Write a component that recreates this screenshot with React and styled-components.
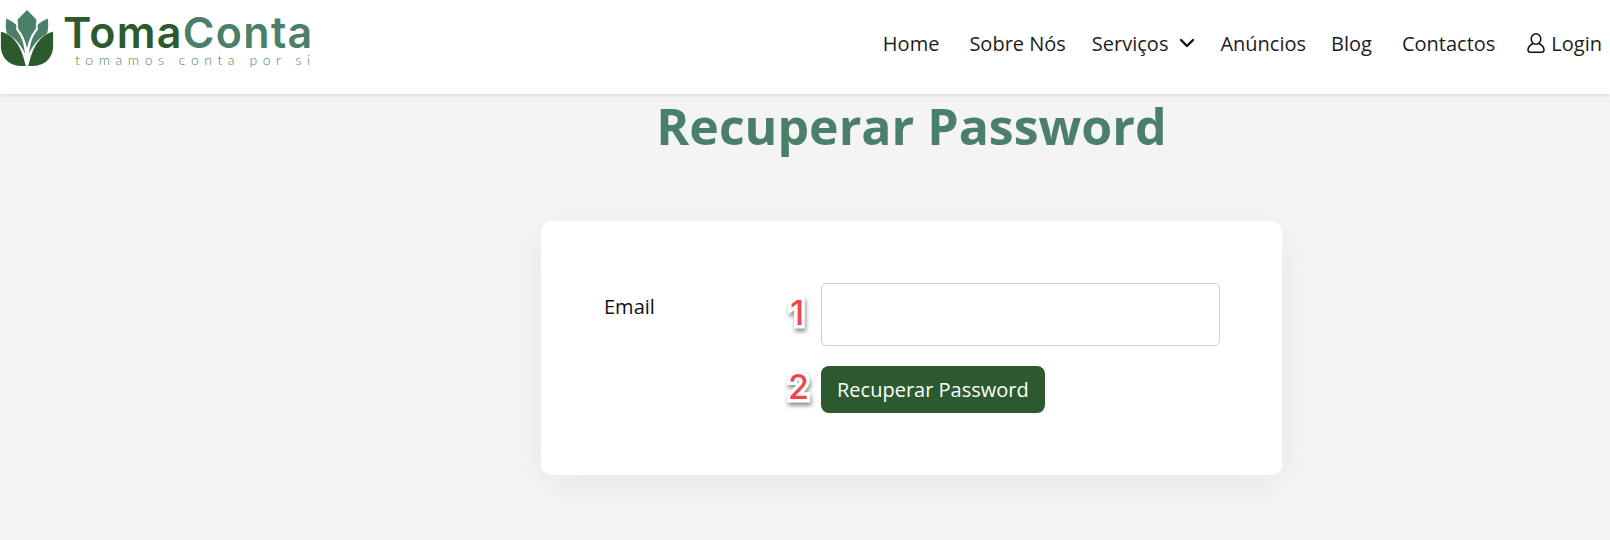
import styled, {createGlobalStyle} from 'styled-components';
import {ChevronDown} from 'lucide-react';

const GlobalStyle = createGlobalStyle`
  html, body {
    margin: 0;
    height: 540px;
    overflow: hidden;
    background: #f4f4f4;
    font-family: "Open Sans", "Noto Sans", sans-serif;
  }
`;

const Header = styled.header`
  height: 94px;
  box-sizing: border-box;
  background: #fff;
  box-shadow: 0 1px 4px rgba(0, 0, 0, 0.12);
  display: flex;
  justify-content: space-between;
  padding: 0 8px 0 0;
`;

const Brand = styled.a`
  display: flex;
  align-items: flex-start;
  padding-top: 10px;
  gap: 9px;
`;

const BrandText = styled.div`
  display: flex;
  flex-direction: column;
  width: 250px;
`;

const BrandName = styled.div`
  font-family: Inter, "Liberation Sans", sans-serif;
  font-size: 43px;
  line-height: 44px;
  font-weight: 600;
  letter-spacing: 1.3px;
  color: #2c5a2e;
  white-space: nowrap;

  span {
    color: #4a8069;
  }
`;

const BrandTagline = styled.div`
  font-family: Lato, sans-serif;
  font-size: 14px;
  font-weight: 300;
  line-height: 12px;
  letter-spacing: 5.55px;
  color: #4a8069;
  white-space: nowrap;
  padding-left: 12px;
`;

const Nav = styled.nav`
  display: flex;
  align-items: center;
  padding-bottom: 8px;
`;

const NavLink = styled.a`
  display: flex;
  align-items: center;
  gap: ${p => p.$iconGap || 0}px;
  margin-left: ${p => p.$offset}px;
  font-size: 20px;
  color: #1c1c1c;
  white-space: nowrap;
`;

const Main = styled.main`
  display: flex;
  flex-direction: column;
  align-items: center;
  padding-left: 213px;
`;

const Title = styled.h1`
  margin: 0;
  font-size: 50px;
  line-height: 64px;
  font-weight: 700;
  color: #4a8069;
`;

const Card = styled.section`
  position: relative;
  width: 741px;
  height: 254px;
  margin-top: 63px;
  box-sizing: border-box;
  padding: 62px 61px 0 63px;
  background: #fff;
  border-radius: 10px;
  box-shadow: 0 10px 40px rgba(0, 0, 0, 0.05);
  display: grid;
  grid-template-columns: 217px 399px;
  grid-template-rows: 63px 47px;
  row-gap: 20px;
`;

const Label = styled.label`
  font-size: 20px;
  line-height: 24px;
  padding-top: 12px;
  color: #111;
`;

const Field = styled.div`
  position: relative;
  grid-column: 2;
`;

const Input = styled.input`
  display: block;
  width: 100%;
  height: 63px;
  box-sizing: border-box;
  border: 1px solid #cfcfcf;
  border-radius: 5px;
  background: #fff;
`;

const Button = styled.button`
  display: block;
  height: 47px;
  padding: 0 16px;
  border: 0;
  border-radius: 8px;
  background: #2c5a2e;
  color: #fff;
  font-family: inherit;
  font-size: 20px;
`;

const Marker = styled.span`
  position: absolute;
  left: ${p => p.$left}px;
  top: ${p => p.$top}px;
  font-family: Inter, "Liberation Sans", sans-serif;
  font-size: 34px;
  line-height: 36px;
  font-weight: 500;
  color: #f5444a;
  -webkit-text-stroke: 7px #fff;
  paint-order: stroke fill;
  filter: drop-shadow(1px 3px 2px rgba(0, 0, 0, 0.45));
`;

function Logo() {
  return (
    <svg width="54" height="57" viewBox="0 15 160 170">
      <path d="M80 15 L108 43 L106 72 C95 85 85 105 80 130 C75 105 65 85 54 72 L52 43 Z" fill="#4a8069" />
      <path d="M18 40 C30 45 42 52 48 60 L48 75 C62 90 70 110 74 145 C60 115 40 95 20 85 C16 70 16 55 18 40 Z" fill="#4a8069" />
      <path d="M142 40 C130 45 118 52 112 60 L112 75 C98 90 90 110 86 145 C100 115 120 95 140 85 C144 70 144 55 142 40 Z" fill="#4a8069" />
      <path d="M2 80 C35 88 62 115 76 182 C35 185 2 165 2 120 Z" fill="#2c5a2e" />
      <path d="M158 80 C125 88 98 115 84 182 C125 185 158 165 158 120 Z" fill="#2c5a2e" />
    </svg>
  );
}

function UserIcon() {
  return (
    <svg width="18" height="20" viewBox="0 0 18 20" fill="none" stroke="#111" strokeWidth="1.5">
      <ellipse cx="9" cy="6" rx="4.8" ry="5.2" />
      <path d="M6 10.5 C3 12 1 14.5 1 17 C1 18.6 2 19.2 3.5 19.2 H14.5 C16 19.2 17 18.6 17 17 C17 14.5 15 12 12 10.5" />
    </svg>
  );
}

export default function App() {
  return (
    <>
      <GlobalStyle />
      <Header>
        <Brand>
          <Logo />
          <BrandText>
            <BrandName>Toma<span>Conta</span></BrandName>
            <BrandTagline>tomamos conta por si</BrandTagline>
          </BrandText>
        </Brand>
        <Nav>
          <NavLink $offset={0}>Home</NavLink>
          <NavLink $offset={30}>Sobre Nós</NavLink>
          <NavLink $offset={26} $iconGap={7}>Serviços <ChevronDown size={24} strokeWidth={2.4} color="#111" /></NavLink>
          <NavLink $offset={21}>Anúncios</NavLink>
          <NavLink $offset={25}>Blog</NavLink>
          <NavLink $offset={30}>Contactos</NavLink>
          <NavLink $offset={32} $iconGap={6}><UserIcon />Login</NavLink>
        </Nav>
      </Header>
      <Main>
        <Title>Recuperar Password</Title>
        <Card>
          <Label htmlFor="email">Email</Label>
          <Field>
            <Marker $left={-31} $top={12}>1</Marker>
            <Input id="email" type="email" />
          </Field>
          <Field>
            <Marker $left={-33} $top={3}>2</Marker>
            <Button type="button">Recuperar Password</Button>
          </Field>
        </Card>
      </Main>
    </>
  );
}
